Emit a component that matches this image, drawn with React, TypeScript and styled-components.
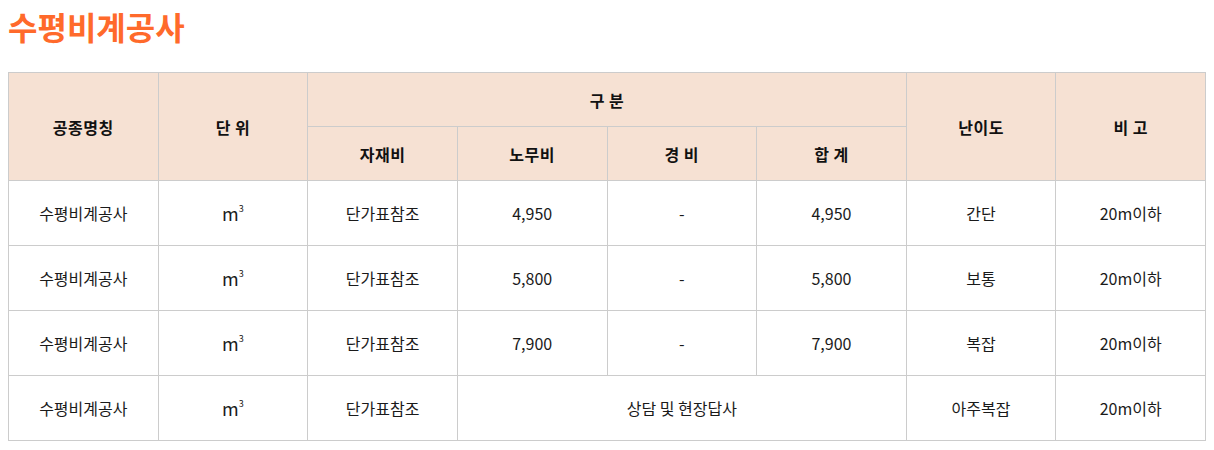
import React from 'react';
import styled, { createGlobalStyle } from 'styled-components';

const GlobalStyle = createGlobalStyle`
  body {
    margin: 8px;
    background: #fff;
    font-family: "Noto Sans CJK KR", "Noto Sans", sans-serif;
    color: #222;
  }
`;

const STitle = styled.h2`
  margin: 0 0 28px;
  font-size: 32px;
  line-height: 36px;
  font-weight: 700;
  color: #ff6a2b;
`;

const STable = styled.table`
  width: 100%;
  border-collapse: collapse;
  table-layout: fixed;
  font-size: 16px;
`;

const SHead = styled.th`
  height: 53px;
  padding: 0;
  border: 1px solid #cccccc;
  background: #f6e1d3;
  font-weight: 700;
  color: #111;
  text-align: center;
  letter-spacing: 0.5px;
`;

const SCell = styled.td`
  height: 64px;
  padding: 0;
  border: 1px solid #cccccc;
  text-align: center;
  color: #1a1a1a;
`;

const SUnit = styled.span`
  font-size: 18px;
  sup {
    font-size: 9px;
    vertical-align: 9px;
  }
`;

type Row = { price: string | null; level: string };

const rows: Row[] = [
  { price: '4,950', level: '간단' },
  { price: '5,800', level: '보통' },
  { price: '7,900', level: '복잡' },
  { price: null, level: '아주복잡' },
];

const App: React.FC = () => (
  <>
    <GlobalStyle />
    <STitle>수평비계공사</STitle>
    <STable>
      <thead>
        <tr>
          <SHead rowSpan={2}>공종명칭</SHead>
          <SHead rowSpan={2}>단 위</SHead>
          <SHead colSpan={4}>구 분</SHead>
          <SHead rowSpan={2}>난이도</SHead>
          <SHead rowSpan={2}>비 고</SHead>
        </tr>
        <tr>
          <SHead>자재비</SHead>
          <SHead>노무비</SHead>
          <SHead>경 비</SHead>
          <SHead>합 계</SHead>
        </tr>
      </thead>
      <tbody>
        {rows.map((r) => (
          <tr key={r.level}>
            <SCell>수평비계공사</SCell>
            <SCell>
              <SUnit>
                m<sup>3</sup>
              </SUnit>
            </SCell>
            <SCell>단가표참조</SCell>
            {r.price ? (
              <>
                <SCell>{r.price}</SCell>
                <SCell>-</SCell>
                <SCell>{r.price}</SCell>
              </>
            ) : (
              <SCell colSpan={3}>상담 및 현장답사</SCell>
            )}
            <SCell>{r.level}</SCell>
            <SCell>20m이하</SCell>
          </tr>
        ))}
      </tbody>
    </STable>
  </>
);

export default App;
